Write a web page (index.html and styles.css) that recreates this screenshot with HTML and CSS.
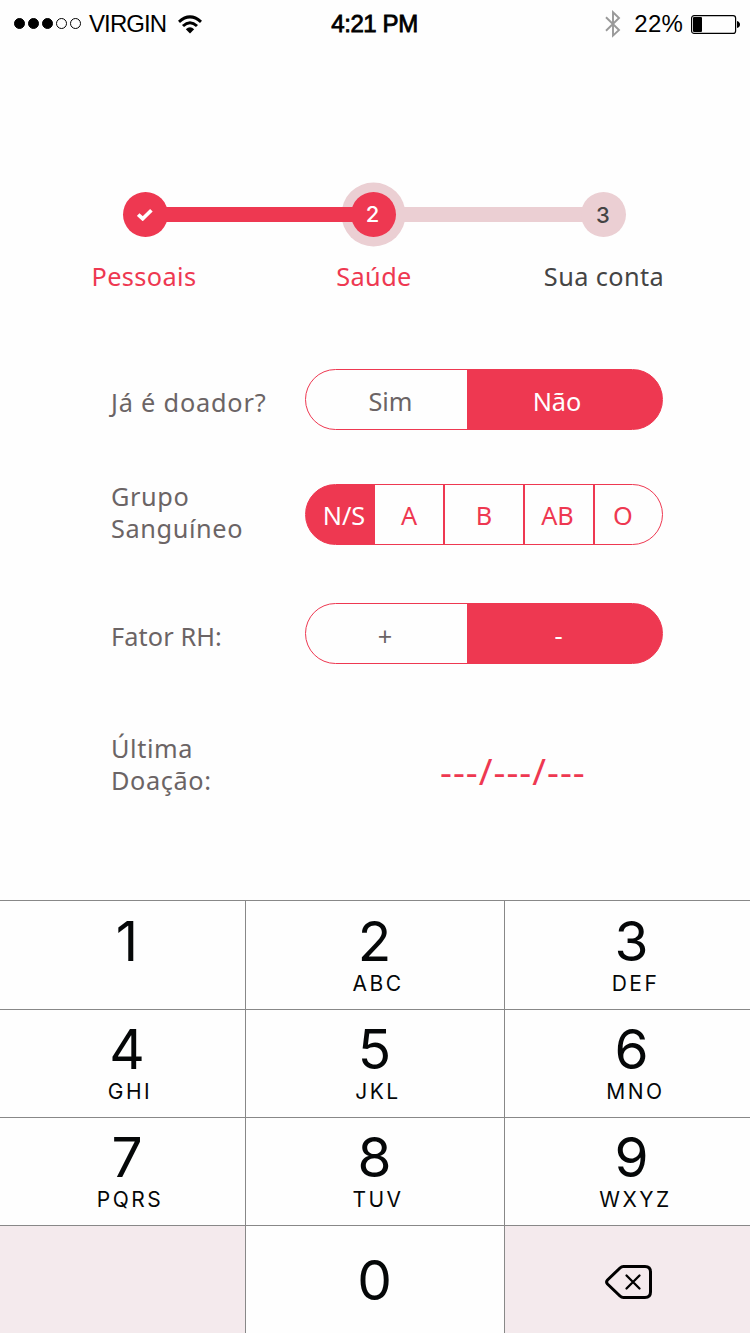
FILE: index.html
```html
<!DOCTYPE html>
<html lang="pt-BR">
<head>
<meta charset="utf-8">
<title>Cadastro - Saúde</title>
<link rel="stylesheet" href="styles.css">
</head>
<body>
<div class="screen">
  <header class="status">
    <div class="status-left">
      <svg class="signal" width="68" height="12" viewBox="0 0 68 12"><g stroke="#000" stroke-width="1"><circle cx="6.500" cy="5.500" r="5"/><circle cx="20.500" cy="5.500" r="5"/><circle cx="34.500" cy="5.500" r="5"/><circle cx="48.500" cy="5.500" r="5" fill="none"/><circle cx="62.500" cy="5.500" r="5" fill="none"/></g></svg>
      <span class="carrier">VIRGIN</span>
      <svg class="wifi" width="24" height="19" viewBox="0 0 24 19"><g fill="none" stroke="#000" stroke-width="3"><path d="M1 6.8Q12 -3 23 6.8"/><path d="M5 11Q12 4.6 19 11"/></g><path d="M7.8 14.2Q12 10.3 16.2 14.2L12 18.4Z"/></svg>
    </div>
    <div class="time">4:21 PM</div>
    <div class="status-right">
      <svg class="bluetooth" width="16" height="28" viewBox="0 0 16 28"><path d="M1 7.2L14 20L8 25.6V2.2L14 8L1 20.8" fill="none" stroke="#999" stroke-width="1.9"/></svg>
      <span class="percent">22%</span>
      <svg class="battery" width="50" height="19" viewBox="0 0 50 19"><rect x=".6" y=".6" width="44" height="17.8" rx="2.5" fill="none" stroke="#000" stroke-width="1.2"/><rect x="2" y="2" width="9" height="15" rx="1"/><path d="M46 6Q49 7 49 9.5Q49 12 46 13Z"/></svg>
    </div>
  </header>

  <section class="steps">
    <div class="track">
      <div class="dot done"><svg width="16" height="13" viewBox="0 0 16 13"><path d="M1.2 6.500L5.700 10.700L14.400 2.200" fill="none" stroke="#fff" stroke-width="3.700"/></svg></div>
      <div class="bar bar-done"></div>
      <div class="dot current">2</div>
      <div class="bar"></div>
      <div class="dot todo">3</div>
    </div>
    <div class="step-labels">
      <span class="active">Pessoais</span>
      <span class="active">Saúde</span>
      <span class="conta">Sua conta</span>
    </div>
  </section>

  <main class="form">
    <div class="row row-donor">
      <div class="label">Já é doador?</div>
      <div class="pill two">
        <div class="opt yes">Sim</div>
        <div class="opt on no">Não</div>
      </div>
    </div>
    <div class="row row-group">
      <div class="label">Grupo<br>Sanguíneo</div>
      <div class="pill five">
        <div class="opt on ns">N/S</div>
        <div class="opt a">A</div>
        <div class="opt b">B</div>
        <div class="opt ab">AB</div>
        <div class="opt o">O</div>
      </div>
    </div>
    <div class="row row-rh">
      <div class="label">Fator RH:</div>
      <div class="pill two">
        <div class="opt plus">+</div>
        <div class="opt on minus">-</div>
      </div>
    </div>
    <div class="row row-last">
      <div class="label">Última<br>Doação:</div>
      <div class="date">---/---/---</div>
    </div>
  </main>

  <section class="keypad">
    <div class="key left"><b>1</b></div>
    <div class="key mid"><b>2</b><i>ABC</i></div>
    <div class="key right"><b>3</b><i>DEF</i></div>
    <div class="key left"><b>4</b><i>GHI</i></div>
    <div class="key mid"><b>5</b><i>JKL</i></div>
    <div class="key right"><b>6</b><i>MNO</i></div>
    <div class="key left"><b>7</b><i>PQRS</i></div>
    <div class="key mid"><b>8</b><i>TUV</i></div>
    <div class="key right"><b>9</b><i>WXYZ</i></div>
    <div class="key left blank"></div>
    <div class="key mid zero"><b>0</b></div>
    <div class="key right blank erase"><svg width="48" height="36" viewBox="0 0 48 36"><path d="M18.5 2.5H40Q45.5 2.5 45.5 8V28Q45.5 33.5 40 33.5H18.5Q16.5 33.5 15 32L2.5 20Q.7 18 2.5 16L15 4Q16.500 2.500 18.500 2.500Z" fill="none" stroke="#000" stroke-width="3"/><path d="M21.500 11.500L34.500 24.500M34.500 11.500L21.500 24.500" stroke="#000" stroke-width="2.300" stroke-linecap="round"/></svg></div>
  </section>
</div>
</body>
</html>
```
FILE: styles.css
```css
* { box-sizing: border-box; }
body { margin: 0; background: #fefefe; }
.screen {
  width: 750px;
  height: 1333px;
  overflow: hidden;
  display: flex;
  flex-direction: column;
  font: 25.3px/32px "Noto Sans", "Open Sans", sans-serif;
  color: #6b6465;
}

/* Status bar */
.status {
  height: 48px;
  flex: none;
  display: grid;
  grid-template-columns: 1fr auto 1fr;
  align-items: center;
  padding: 0 9px 0 13px;
  font: 24px/48px "Liberation Sans", Arial, sans-serif;
  color: #000;
}
.status-left, .status-right { display: flex; align-items: center; height: 47px; }
.status-right { justify-content: flex-end; }
.signal { margin-right: 8px; }
.carrier { letter-spacing: -0.9px; }
.wifi { margin-left: 12px; }
.time { -webkit-text-stroke: 0.8px #000; letter-spacing: -0.4px; margin-left: -5px; }
.bluetooth { margin-right: 13px; }
.percent { margin-right: 8px; letter-spacing: 0.2px; }

/* Progress steps */
.steps { flex: none; height: 321px; padding-top: 144px; }
.track { display: flex; align-items: center; padding-left: 122.5px; height: 45px; }
.dot {
  width: 45px;
  height: 45px;
  flex: none;
  border-radius: 50%;
  display: flex;
  align-items: center;
  justify-content: center;
  background: #ee3851;
  color: #fff;
  font: 500 22px/45px Inter, sans-serif;
}
.current { box-shadow: 0 0 0 9.5px #ebcfd3; padding-right: 1px; }
.todo { background: #ebcfd3; color: #444; padding-top: 2px; }
.bar { height: 15px; width: 184px; margin: 0 -4px 0 5px; flex: none; background: #ebcfd3; }
.bar-done { width: 191px; margin: 0 -4px; background: #ee3851; position: relative; z-index: 1; }
.step-labels {
  display: grid;
  grid-template-columns: 230px 230px 230px;
  text-align: center;
  padding: 23px 0 0 29px;
  color: #444;
  letter-spacing: 0.4px;
}
.active { color: #ee3851; }

/* Form */
.form { flex: none; height: 531px; padding-left: 111px; }
.row { display: flex; align-items: flex-start; }
.row-donor { height: 115px; }
.row-group { height: 119px; }
.row-rh { height: 117px; }
.label { width: 194px; flex: none; letter-spacing: 0.6px; }
.row-donor .label { padding-top: 17px; letter-spacing: 0.8px; }
.row-group .label { margin-top: -4px; }
.row-rh .label { padding-top: 17px; letter-spacing: 0.1px; }
.row-last .label { margin-top: 12px; }
.pill {
  width: 358px;
  height: 61px;
  display: grid;
  border: 1px solid #ee3851;
  border-radius: 31px;
}
.two {
  grid-template-columns: 161px 195px;
  background: linear-gradient(90deg, #fefefe 162px, #ee3851 162px) border-box;
}
.five {
  grid-template-columns: 69px 68px 80px 70px 69px;
  color: #ee3851;
  background: linear-gradient(90deg, #ee3851 70px, #fefefe 70px) border-box;
}
.opt { text-align: center; line-height: 62px; white-space: nowrap; height: 59px; }
.five .opt { line-height: 60px; }
.pill .on { color: #fff; }
.five .opt + .opt + .opt { border-left: 2px solid #ee3851; }
.yes { padding-left: 8px; }
.no { padding-right: 15px; }
.ns { padding-left: 7px; }
.ab { padding-right: 3px; }
.o { padding-right: 11px; }
.plus { padding-right: 3px; }
.row-rh .opt.plus { line-height: 65px; }
.minus { padding-right: 12px; }
.date { color: #ee3851; font-size: 37px; line-height: 50px; letter-spacing: 1px; margin: 26px 0 0 135px; }

/* Numeric keypad */
.keypad {
  flex: none;
  display: grid;
  grid-template-columns: 245px 260px 245px;
  grid-template-rows: 109px 108px 108px 108px;
  font-family: Inter, sans-serif;
  color: #050708;
}
.key {
  display: flex;
  flex-direction: column;
  align-items: center;
  padding-top: 12px;
  border-top: 1px solid #888;
  background: #fefefe;
}
.key:nth-child(-n+3) { padding-top: 13px; }
.key b { font-weight: 400; font-size: 55px; line-height: 54px; }
.key i { font-style: normal; font-size: 21px; line-height: 24px; margin-top: 4px; letter-spacing: 2.5px; }
.left { padding-left: 9px; }
.left i { margin-left: 6px; }
.mid { border-left: 1px solid #888; border-right: 1px solid #888; padding-right: 1px; }
.mid i { margin-left: 7px; }
.right { padding-left: 8px; }
.right i { margin-left: 8px; }
.keypad .zero { padding-top: 27px; }
.keypad .blank { background: #f4eaed; }
.keypad .erase { padding: 38px 0 0 2px; }
```
